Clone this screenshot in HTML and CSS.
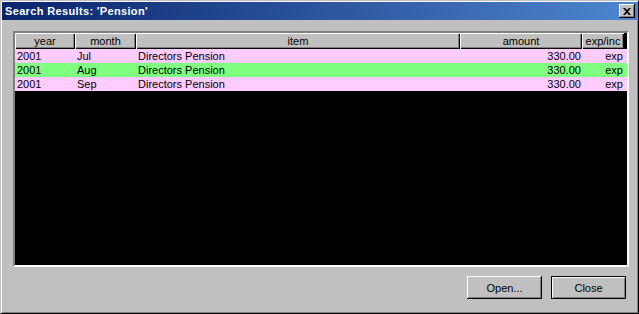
FILE: index.html
```html
<!doctype html>
<html>
	<head>
		<link rel="stylesheet" href="styles.css">
	</head>
	<body>
		<div class="window">
			<div class="titlebar">
				<span class="title">Search Results: 'Pension'</span>
				<span class="close-box">
					<svg width="8" height="7" viewBox="0 0 8 7"><path d="M0 0h2l2 2 2-2h2L5 3.5 8 7H6L4 5 2 7H0l3-3.5z" fill="#000"/></svg>
				</span>
			</div>
			<div class="client">
				<div class="listview">
					<div class="row header">
						<div class="hcell">year</div>
						<div class="hcell">month</div>
						<div class="hcell">item</div>
						<div class="hcell">amount</div>
						<div class="hcell">exp/inc</div>
					</div>
					<div class="row pink">
						<div class="cell">2001</div>
						<div class="cell">Jul</div>
						<div class="cell">Directors Pension</div>
						<div class="cell num">330.00</div>
						<div class="cell num">exp</div>
					</div>
					<div class="row green">
						<div class="cell">2001</div>
						<div class="cell">Aug</div>
						<div class="cell">Directors Pension</div>
						<div class="cell num">330.00</div>
						<div class="cell num">exp</div>
					</div>
					<div class="row pink">
						<div class="cell">2001</div>
						<div class="cell">Sep</div>
						<div class="cell">Directors Pension</div>
						<div class="cell num">330.00</div>
						<div class="cell num">exp</div>
					</div>
				</div>
				<div class="buttons">
					<div class="btn">Open...</div>
					<div class="btn default"><div class="btn-in">Close</div></div>
				</div>
			</div>
		</div>
	</body>
</html>
```
FILE: styles.css
```css
* {
	margin: 0;
	padding: 0;
	box-sizing: border-box;
}
body {
	background: #c0c0c0;
	font-family: "Liberation Sans", Arial, sans-serif;
	font-size: 11px;
	color: #000;
}
.window {
	width: 639px;
	height: 314px;
	display: flex;
	flex-direction: column;
	padding: 1px;
	border: 1px solid;
	border-color: #c0c0c0 #000 #000 #c0c0c0;
	box-shadow: inset 1px 1px 0 #fff, inset -1px -1px 0 #808080;
	background: #c0c0c0;
}
.titlebar {
	height: 18px;
	display: flex;
	align-items: center;
	justify-content: space-between;
	padding: 0 2px 0 3px;
	background: linear-gradient(to right, #0a246a, #4d86cf);
}
.title {
	color: #fff;
	font-weight: bold;
	font-size: 11px;
	letter-spacing: 0.35px;
}
.close-box {
	width: 16px;
	height: 14px;
	display: flex;
	align-items: center;
	justify-content: center;
	background: #c0c0c0;
	box-shadow: inset -1px -1px 0 #000, inset 1px 1px 0 #fff, inset -2px -2px 0 #808080;
}
.client {
	flex: 1;
	display: flex;
	flex-direction: column;
	padding: 11px 8px 11px 11px;
}
.listview {
	height: 236px;
	background: #000;
	border: 2px solid;
	border-color: #808080 #fff #fff #808080;
	overflow: hidden;
}
.row {
	display: grid;
	grid-template-columns: 60px 61px 324px 122px 42px;
	height: 14px;
	line-height: 14px;
}
.row.header {
	height: 16px;
	line-height: 16px;
}
.hcell {
	background: #c0c0c0;
	text-align: center;
	box-shadow: inset 1px 1px 0 #fff, inset -1px -1px 0 #000, inset -2px -2px 0 #808080;
}
.cell {
	padding: 0 2px;
	white-space: nowrap;
}
.cell.num {
	text-align: right;
	padding-right: 1px;
}
.pink {
	background: #ffccff;
}
.green {
	background: #80ff80;
}
.buttons {
	display: flex;
	justify-content: flex-end;
	gap: 9px;
	margin-top: 9px;
	padding-right: 3px;
}
.btn {
	width: 75px;
	height: 23px;
	display: flex;
	align-items: center;
	justify-content: center;
	background: #c0c0c0;
	box-shadow: inset -1px -1px 0 #000, inset 1px 1px 0 #fff, inset -2px -2px 0 #808080;
}
.btn.default {
	border: 1px solid #000;
	box-shadow: none;
}
.btn-in {
	width: 100%;
	height: 100%;
	display: flex;
	align-items: center;
	justify-content: center;
	box-shadow: inset 1px 1px 0 #fff, inset -1px -1px 0 #808080;
}
```
